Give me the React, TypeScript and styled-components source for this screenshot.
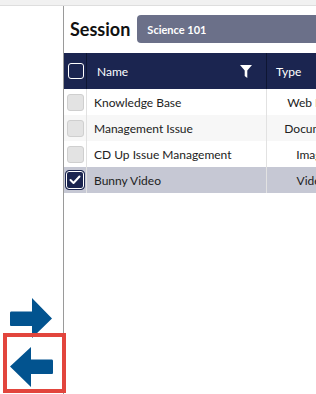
import React from "react";
import styled, { createGlobalStyle } from "styled-components";

const Global = createGlobalStyle`
  html, body, #root { margin: 0; padding: 0; height: 100%; }
  body { background: #ffffff; font-family: Lato, "Open Sans", Arial, sans-serif; overflow: hidden; }
  * { box-sizing: border-box; }
`;

const Page = styled.div`
  height: 394px;
  width: 316px;
  display: flex;
  flex-direction: column;
  overflow: hidden;
`;

const TopStrip = styled.div`
  height: 6px;
  background: #f1f1f1;
  border-bottom: 1px solid #dedede;
  flex: none;
`;

const Main = styled.div`
  flex: 1;
  display: flex;
  min-height: 0;
`;

const Sidebar = styled.div`
  width: 63px;
  flex: none;
  display: flex;
  flex-direction: column;
  justify-content: flex-end;
  position: relative;
  z-index: 2;
`;

const ArrowButton = styled.div`
  padding-left: 10px;
  height: 35px;
  display: flex;
  align-items: flex-start;
`;

const HighlightBox = styled.div`
  margin-left: 3px;
  margin-bottom: 1px;
  width: 63px;
  height: 60px;
  border: 4px solid #e2453d;
  padding: 10px 0 0 3px;
`;

const Panel = styled.div`
  flex: 1;
  border-left: 1px solid #9a9a9a;
  display: flex;
  flex-direction: column;
  min-width: 0;
`;

const SessionRow = styled.div`
  display: flex;
  align-items: flex-start;
  gap: 7px;
  padding: 9px 0 0 6px;
  height: 46px;
`;

const SessionLabel = styled.div`
  font-size: 18px;
  font-weight: 700;
  color: #111;
  line-height: 28px;
`;

const SessionSelect = styled.div`
  flex: 1;
  height: 28px;
  background: #6b7089;
  border-radius: 4px 0 0 4px;
  color: #fff;
  font-size: 11px;
  font-weight: 700;
  display: flex;
  align-items: center;
  padding-left: 10px;
  white-space: nowrap;
`;

const Table = styled.div`
  margin-top: 1px;
  display: grid;
  grid-template-columns: 23px 180px 86px;
  width: 289px;
`;

const HeaderCell = styled.div<{ $center?: boolean; $last?: boolean }>`
  height: 36px;
  background: #1b2550;
  color: #fff;
  font-size: 12px;
  display: flex;
  align-items: center;
  justify-content: ${(p) => (p.$center ? "center" : "flex-start")};
  padding-left: ${(p) => (p.$center ? "0" : "9px")};
  border-right: ${(p) => (p.$last ? "none" : "1px solid #0e1633")};
  white-space: nowrap;
`;

const NameHeader = styled(HeaderCell)`
  justify-content: space-between;
  padding-left: 10px;
  padding-right: 14px;
`;

const HeaderBox = styled.div`
  width: 16px;
  height: 16px;
  border: 1px solid #fff;
  border-radius: 3px;
  margin-left: 2px;
`;

const Cell = styled.div<{ $bg: string; $center?: boolean; $last?: boolean }>`
  height: 26px;
  background: ${(p) => p.$bg};
  display: flex;
  align-items: center;
  justify-content: ${(p) => (p.$center ? "center" : "flex-start")};
  font-size: 12px;
  color: #222;
  border-right: ${(p) => (p.$last ? "none" : "1px solid #e2e2e2")};
  white-space: nowrap;
  overflow: hidden;
`;

const NameCell = styled(Cell)`
  padding-left: 7px;
`;

const TypeCell = styled(Cell)`
  padding-left: 4px;
`;

const Box = styled.div<{ $checked?: boolean }>`
  width: ${(p) => (p.$checked ? "20px" : "17px")};
  height: ${(p) => (p.$checked ? "20px" : "17px")};
  border-radius: ${(p) => (p.$checked ? "4px" : "3px")};
  background: ${(p) => (p.$checked ? "#1b2550" : "#e3e3e3")};
  border: 1px solid ${(p) => (p.$checked ? "#1b2550" : "#cfcfcf")};
  box-shadow: ${(p) => (p.$checked ? "inset 0 0 0 1px #fff" : "none")};
  display: flex;
  align-items: center;
  justify-content: center;
  margin-left: ${(p) => (p.$checked ? "0" : "1px")};
`;

const ArrowRight = () => (
  <svg width="43" height="40" viewBox="0 0 43 40">
    <path d="M1 13.5 Q0 13.5 0 15 L0 27 Q0 28 1 28 L22 28 L22 40 L42 20.5 L22 0 L22 13.5 Z" fill="#02538f" />
  </svg>
);

const ArrowLeft = () => (
  <svg width="43" height="40" viewBox="0 0 43 40">
    <path d="M42 12.5 Q43 12.5 43 14 L43 26 Q43 27 42 27 L21 27 L21 40 L0 19.5 L21 0 L21 12.5 Z" fill="#02538f" />
  </svg>
);

const Filter = () => (
  <svg width="12" height="13" viewBox="0 0 12 13">
    <path d="M0 0 L12 0 L7.3 5.6 L7.3 13 L4.7 11 L4.7 5.6 Z" fill="#fff" />
  </svg>
);

const Check = () => (
  <svg width="12" height="10" viewBox="0 0 12 10">
    <path d="M1.5 5 L4.5 8 L10.5 1.5" stroke="#fff" strokeWidth="2" fill="none" strokeLinecap="round" strokeLinejoin="round" />
  </svg>
);

const rows = [
  { name: "Knowledge Base", type: "Web Link", bg: "#ffffff" },
  { name: "Management Issue", type: "Document", bg: "#f7f7f7" },
  { name: "CD Up Issue Management", type: "Image", bg: "#ffffff" },
  { name: "Bunny Video", type: "Video", bg: "#c6c8d4", checked: true },
];

export default function App() {
  return (
    <Page>
      <Global />
      <TopStrip />
      <Main>
        <Sidebar>
          <ArrowButton>
            <ArrowRight />
          </ArrowButton>
          <HighlightBox>
            <ArrowLeft />
          </HighlightBox>
        </Sidebar>
        <Panel>
          <SessionRow>
            <SessionLabel>Session</SessionLabel>
            <SessionSelect>Science 101</SessionSelect>
          </SessionRow>
          <Table>
            <HeaderCell $center>
              <HeaderBox />
            </HeaderCell>
            <NameHeader>
              <span>Name</span>
              <Filter />
            </NameHeader>
            <HeaderCell $last>Type</HeaderCell>
            {rows.map((r) => (
              <React.Fragment key={r.name}>
                <Cell $bg={r.bg} $center>
                  <Box $checked={r.checked}>{r.checked && <Check />}</Box>
                </Cell>
                <NameCell $bg={r.bg}>{r.name}</NameCell>
                <TypeCell $bg={r.bg} $center $last>{r.type}</TypeCell>
              </React.Fragment>
            ))}
          </Table>
        </Panel>
      </Main>
    </Page>
  );
}
